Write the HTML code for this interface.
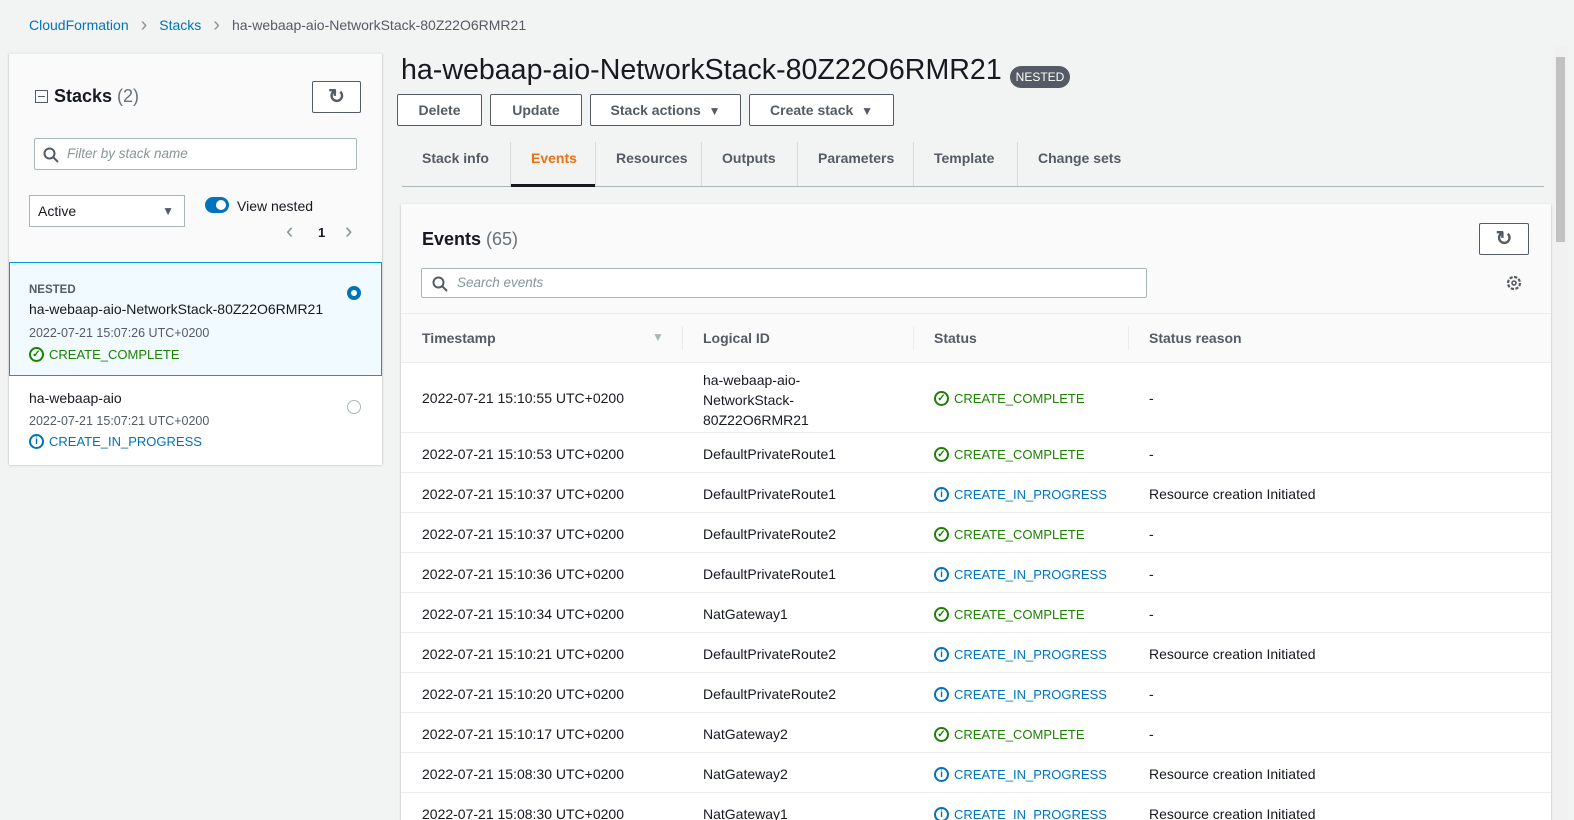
<!DOCTYPE html>
<html style="overflow:hidden"><head><style>
*{box-sizing:border-box;margin:0;padding:0}
body{width:1574px;height:820px;overflow:hidden;background:#f2f3f3;font-family:"Liberation Sans",sans-serif;color:#16191f;font-size:14px;position:relative}
.abs{position:absolute}
a{color:#0073bb;text-decoration:none}
.bc{left:29px;top:17px;font-size:14px;color:#545b64}
.bc span.sep{color:#879596;margin:0 12px;font-size:20px;line-height:14px;vertical-align:-1px}
.left{left:9px;top:53px;width:373px;height:411px;background:#fafafa;box-shadow:0 1px 2px rgba(0,0,0,.3);border-top:1px solid #eaeded}
.btn{position:absolute;border:1px solid #545b64;background:#fff;border-radius:2px;font-weight:bold;color:#545b64;font-size:14px;text-align:center}
.inp{position:absolute;border:1px solid #aab7b8;background:#fff;border-radius:2px;color:#879596;font-style:italic;font-size:13.5px}
.g{color:#1d8102}.b{color:#0073bb}
.st{font-size:13px;display:flex;align-items:center;height:17px}
.tabs{left:402px;top:142px;width:1142px;height:45px;border-bottom:1px solid #aab7b8}
.tab{position:absolute;top:0;height:44px;line-height:33px;font-weight:bold;color:#545b64;font-size:14px;border-left:1px solid #d5dbdb;padding-left:20px}
.card{left:401px;top:204px;width:1150px;height:616px;background:#fff;box-shadow:0 1px 2px rgba(0,0,0,.3);overflow:hidden}
.row{position:absolute;left:0;width:100%;border-top:1px solid #eaeded;font-size:14px}
.row div{position:absolute}
.row div.st{position:absolute}
.ic{display:inline-block;flex:none;width:15px;height:15px;border-radius:50%;border:2px solid;margin-right:5px;font-size:10px;text-align:center;line-height:11px;font-weight:bold}
</style></head><body>
<div class="abs bc"><a>CloudFormation</a><span class="sep">›</span><a>Stacks</a><span class="sep">›</span>ha-webaap-aio-NetworkStack-80Z22O6RMR21</div>

<div class="abs left">
 <div class="abs" style="left:26px;top:32px;font-size:18px;font-weight:bold"><span style="display:inline-block;width:13px;height:13px;border:1.5px solid #545b64;vertical-align:-1px;position:relative;margin-right:6px"><span style="position:absolute;left:2px;right:2px;top:4.5px;height:1.5px;background:#545b64"></span></span>Stacks <span style="font-weight:normal;color:#687078">(2)</span></div>
 <div class="btn" style="left:303px;top:27px;width:49px;height:32px;line-height:30px;font-size:20px">&#x21bb;</div>
 <div class="inp" style="left:25px;top:84px;width:323px;height:32px;line-height:30px;padding-left:32px">Filter by stack name
  <svg class="abs" style="left:8px;top:8px" width="16" height="16"><circle cx="6.5" cy="6.5" r="5" fill="none" stroke="#545b64" stroke-width="2"/><path d="M10 10l5 5" stroke="#545b64" stroke-width="2"/></svg></div>
 <div class="abs" style="left:20px;top:141px;width:156px;height:32px;border:1px solid #aab7b8;background:#fff;line-height:30px;padding-left:8px;color:#16191f">Active<span style="position:absolute;right:10px;top:0;color:#545b64;font-size:12px">&#9660;</span></div>
 <div class="abs" style="left:196px;top:143px;width:24px;height:16px;border-radius:8px;background:#0073bb"><div class="abs" style="right:3px;top:3px;width:10px;height:10px;border-radius:50%;background:#fff"></div></div>
 <div class="abs" style="left:228px;top:144px">View nested</div>
 <div class="abs" style="left:277px;top:164px;color:#879596;font-size:22px">&#x2039;</div>
 <div class="abs" style="left:309px;top:171px;font-weight:bold;font-size:13px">1</div>
 <div class="abs" style="left:336px;top:164px;color:#879596;font-size:22px">&#x203a;</div>
 <div class="abs" style="left:0;top:208px;width:373px;height:114px;background:#f1faff;border:1px solid #00a1c9">
  <div class="abs" style="left:19px;top:21px;font-size:11.5px;font-weight:bold;color:#545b64">NESTED</div>
  <div class="abs" style="left:19px;top:38px">ha-webaap-aio-NetworkStack-80Z22O6RMR21</div>
  <div class="abs" style="left:19px;top:63px;font-size:12.5px;color:#545b64">2022-07-21 15:07:26 UTC+0200</div>
  <div class="abs g st" style="left:19px;top:83px"><span class="ic">✓</span>CREATE_COMPLETE</div>
  <div class="abs" style="left:337px;top:23px;width:14px;height:14px;border-radius:50%;border:4px solid #0073bb;background:#fff"></div>
 </div>
 <div class="abs" style="left:0;top:322px;width:373px;height:89px;background:#fff">
  <div class="abs" style="left:20px;top:14px">ha-webaap-aio</div>
  <div class="abs" style="left:20px;top:38px;font-size:12.5px;color:#545b64">2022-07-21 15:07:21 UTC+0200</div>
  <div class="abs b st" style="left:20px;top:57px"><span class="ic">i</span>CREATE_IN_PROGRESS</div>
  <div class="abs" style="left:338px;top:24px;width:14px;height:14px;border-radius:50%;border:1px solid #aab7b8"></div>
 </div>
</div>

<div class="abs" style="left:401px;top:54px;font-size:28.6px">ha-webaap-aio-NetworkStack-80Z22O6RMR21</div>
<div class="abs" style="left:1010px;top:66px;width:60px;height:22px;border-radius:11px;background:#545b64;color:#fff;font-size:12px;text-align:center;line-height:22px">NESTED</div>
<div class="btn" style="left:397px;top:94px;width:85px;height:32px;line-height:30px">Delete</div>
<div class="btn" style="left:490px;top:94px;width:92px;height:32px;line-height:30px">Update</div>
<div class="btn" style="left:590px;top:94px;width:151px;height:32px;line-height:30px">Stack actions &nbsp;<span style="font-size:12px">&#9660;</span></div>
<div class="btn" style="left:749px;top:94px;width:145px;height:32px;line-height:30px">Create stack &nbsp;<span style="font-size:12px">&#9660;</span></div>

<div class="abs tabs">
 <div class="tab" style="left:0;border:none">Stack info</div>
 <div class="tab" style="left:108px;width:85px;color:#ec7211">Events<div class="abs" style="left:0;right:0;bottom:-1px;height:3px;background:#16191f"></div></div>
 <div class="tab" style="left:193px">Resources</div>
 <div class="tab" style="left:299px">Outputs</div>
 <div class="tab" style="left:395px">Parameters</div>
 <div class="tab" style="left:511px">Template</div>
 <div class="tab" style="left:615px">Change sets</div>
</div>

<div class="abs card">
 <div class="abs" style="left:0;top:0;width:100%;height:110px;background:#fafafa"></div>
 <div class="abs" style="left:21px;top:25px;font-size:18px;font-weight:bold">Events <span style="font-weight:normal;color:#687078">(65)</span></div>
 <div class="btn" style="left:1078px;top:19px;width:50px;height:32px;line-height:30px;font-size:20px">&#x21bb;</div>
 <div class="inp" style="left:20px;top:64px;width:726px;height:30px;line-height:28px;padding-left:35px">Search events
  <svg class="abs" style="left:10px;top:7px" width="16" height="16"><circle cx="6.5" cy="6.5" r="5" fill="none" stroke="#545b64" stroke-width="2"/><path d="M10 10l5 5" stroke="#545b64" stroke-width="2"/></svg></div>
 <svg class="abs" style="left:1104px;top:70px" width="18" height="18" viewBox="0 0 18 18"><circle cx="9" cy="9" r="6" fill="none" stroke="#545b64" stroke-width="2.2" stroke-dasharray="3.2 1.5"/><circle cx="9" cy="9" r="2" fill="none" stroke="#545b64" stroke-width="1.6"/></svg>
 <div class="row" style="top:109px;height:49px;background:#fafafa;font-weight:bold;color:#545b64">
  <div style="left:21px;top:16px">Timestamp</div><div style="left:251px;top:16px;color:#aab7b8;font-size:12px">&#9660;</div>
  <div style="left:281px;top:12px;height:24px;border-left:1px solid #eaeded"></div><div style="left:302px;top:16px">Logical ID</div>
  <div style="left:512px;top:12px;height:24px;border-left:1px solid #eaeded"></div><div style="left:533px;top:16px">Status</div>
  <div style="left:727px;top:12px;height:24px;border-left:1px solid #eaeded"></div><div style="left:748px;top:16px">Status reason</div>
 </div>
 <div class="row" style="top:158px;height:70px">
  <div style="left:21px;top:27px">2022-07-21 15:10:55 UTC+0200</div>
  <div style="left:302px;top:7px;line-height:20px">ha-webaap-aio-<br>NetworkStack-<br>80Z22O6RMR21</div>
  <div class="g st" style="left:533px;top:27px"><span class="ic">✓</span>CREATE_COMPLETE</div>
  <div style="left:748px;top:27px">-</div>
 </div>
 <div id="rows"></div>
</div>
<div class="abs" style="left:1553px;top:45px;width:15px;height:775px;background:#f1f1f1"><div class="abs" style="left:3px;top:12px;width:9px;height:185px;background:#c1c1c1"></div></div>
<script>
var d=[["2022-07-21 15:10:53 UTC+0200","DefaultPrivateRoute1",1,"-"],["2022-07-21 15:10:37 UTC+0200","DefaultPrivateRoute1",0,"Resource creation Initiated"],["2022-07-21 15:10:37 UTC+0200","DefaultPrivateRoute2",1,"-"],["2022-07-21 15:10:36 UTC+0200","DefaultPrivateRoute1",0,"-"],["2022-07-21 15:10:34 UTC+0200","NatGateway1",1,"-"],["2022-07-21 15:10:21 UTC+0200","DefaultPrivateRoute2",0,"Resource creation Initiated"],["2022-07-21 15:10:20 UTC+0200","DefaultPrivateRoute2",0,"-"],["2022-07-21 15:10:17 UTC+0200","NatGateway2",1,"-"],["2022-07-21 15:08:30 UTC+0200","NatGateway2",0,"Resource creation Initiated"],["2022-07-21 15:08:30 UTC+0200","NatGateway1",0,"Resource creation Initiated"]];
var h="";d.forEach(function(r,i){var t=228+i*40;h+='<div class="row" style="top:'+t+'px;height:40px"><div style="left:21px;top:13px">'+r[0]+'</div><div style="left:302px;top:13px">'+r[1]+'</div><div class="st '+(r[2]?'g':'b')+'" style="left:533px;top:13px"><span class="ic">'+(r[2]?'✓':'i')+'</span>'+(r[2]?'CREATE_COMPLETE':'CREATE_IN_PROGRESS')+'</div><div style="left:748px;top:13px">'+r[3]+'</div></div>';});
document.getElementById('rows').outerHTML=h;
</script>
</body></html>
